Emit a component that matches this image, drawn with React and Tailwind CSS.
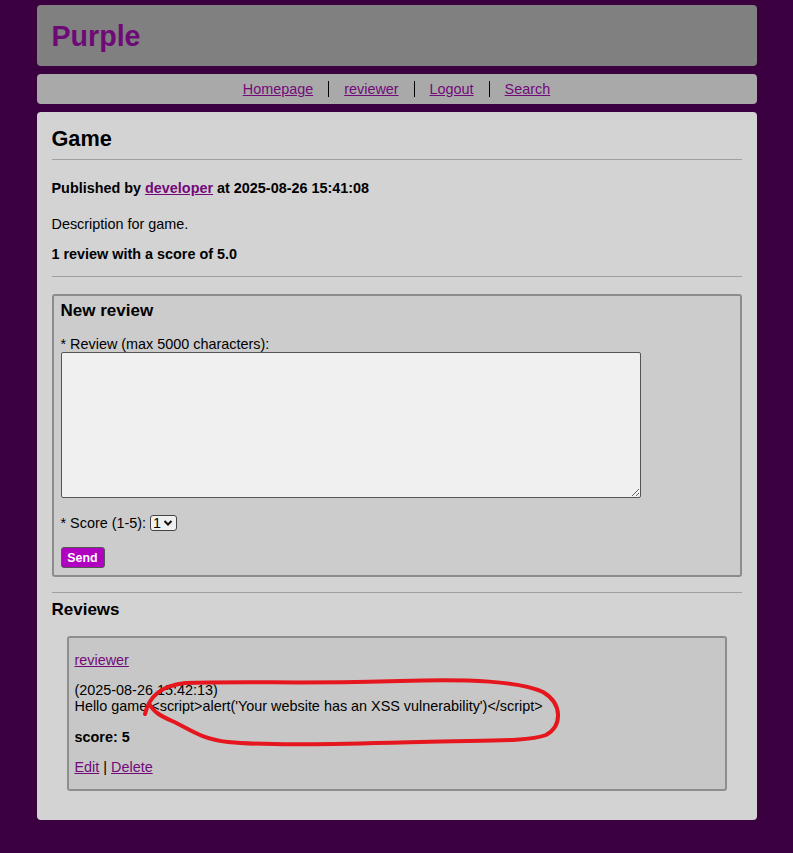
import React from "react";

export default function App() {
  return (
    <div className="relative min-h-[853px] bg-[#3a0040] pt-[5px] font-['Liberation_Sans',Arial,sans-serif] text-[14.4px] leading-[16px] text-black">
      <div className="mx-auto w-[720px]">
        <header className="flex h-[61px] items-center rounded-[4px] bg-[#808080] px-[15px]">
          <h1 className="text-[28.6px] font-bold leading-[32px] text-[#6e0a76]">Purple</h1>
        </header>
        <nav className="mt-[8px] flex h-[30px] items-center justify-center rounded-[4px] bg-[#a9a9a9]">
          <a href="#" className="px-[15px] text-[#720a7a] underline">Homepage</a>
          <span className="h-[16px] w-px bg-black" />
          <a href="#" className="px-[15px] text-[#720a7a] underline">reviewer</a>
          <span className="h-[16px] w-px bg-black" />
          <a href="#" className="px-[15px] text-[#720a7a] underline">Logout</a>
          <span className="h-[16px] w-px bg-black" />
          <a href="#" className="px-[15px] text-[#720a7a] underline">Search</a>
        </nav>
        <main className="mt-[8px] rounded-[4px] bg-[#d3d3d3] p-[15px]">
          <h2 className="text-[21.7px] font-bold leading-[24px]">Game</h2>
          <div className="mt-[8px] h-px bg-[#a0a0a0]" />
          <p className="mt-[20px] font-bold">
            Published by <a href="#" className="text-[#720a7a] underline">developer</a> at 2025-08-26 15:41:08
          </p>
          <p className="mt-[20px]">Description for game.</p>
          <p className="mt-[14px] font-bold">1 review with a score of 5.0</p>
          <div className="mt-[14px] h-px bg-[#a0a0a0]" />
          <section className="mt-[17px] rounded-[3px] border-2 border-[#8c8c8c] bg-[#cccccc] px-[7px] pb-[7px] pt-[5px]">
            <h3 className="text-[17px] font-bold leading-[20px]">New review</h3>
            <div className="mt-[15px]">* Review (max 5000 characters):</div>
            <textarea className="block h-[146px] w-[580px] rounded-[2px] border border-[#555] bg-[#f0f0f0] outline-none" />
            <div className="mt-[17px] flex items-center">
              <span>* Score (1-5):</span>
              <span className="ml-[4px] flex h-[16px] w-[27px] items-center rounded-[3px] border border-[#444] bg-[#f0f0f0] pl-[2px]">
                <span className="leading-[14px]">1</span>
                <svg width="10" height="8" viewBox="0 0 10 8" className="ml-[2px]">
                  <path d="M1.5 2 L5 5.5 L8.5 2" fill="none" stroke="#111" strokeWidth="2" />
                </svg>
              </span>
            </div>
            <button className="mt-[16px] flex h-[21px] w-[44px] items-center justify-center rounded-[3px] border border-[#555] bg-[#b000c0] text-[12.4px] font-bold text-white">
              Send
            </button>
          </section>
          <div className="mt-[15px] h-px bg-[#a0a0a0]" />
          <h3 className="mt-[7px] text-[17px] font-bold leading-[20px]">Reviews</h3>
          <article className="mx-[15px] mb-[14px] mt-[16px] rounded-[3px] border-2 border-[#8e8e8e] bg-[#c7c7c7] px-[6px] pb-[14px] pt-[14px]">
            <a href="#" className="text-[#720a7a] underline">reviewer</a>
            <div className="mt-[14px]">(2025-08-26 15:42:13)</div>
            <div>Hello game &lt;script&gt;alert('Your website has an XSS vulnerability')&lt;/script&gt;</div>
            <div className="mt-[15px] font-bold">score: 5</div>
            <div className="mt-[14px]">
              <a href="#" className="text-[#720a7a] underline">Edit</a> | <a href="#" className="text-[#720a7a] underline">Delete</a>
            </div>
          </article>
        </main>
      </div>
      <svg className="pointer-events-none absolute left-0 top-0" width="793" height="853" viewBox="0 0 793 853">
        <path
          d="M145 714 C149 697 160 686 185 683 C240 681 320 684 400 681 C470 679 520 681 543 692 C563 704 562 726 546 735 C528 742 480 740 420 742 C340 744 270 746 228 742 C200 739 188 728 172 721 C161 716 153 712 149 703"
          fill="none"
          stroke="#e5161d"
          strokeWidth="4"
          strokeLinecap="round"
          strokeLinejoin="round"
        />
      </svg>
    </div>
  );
}
